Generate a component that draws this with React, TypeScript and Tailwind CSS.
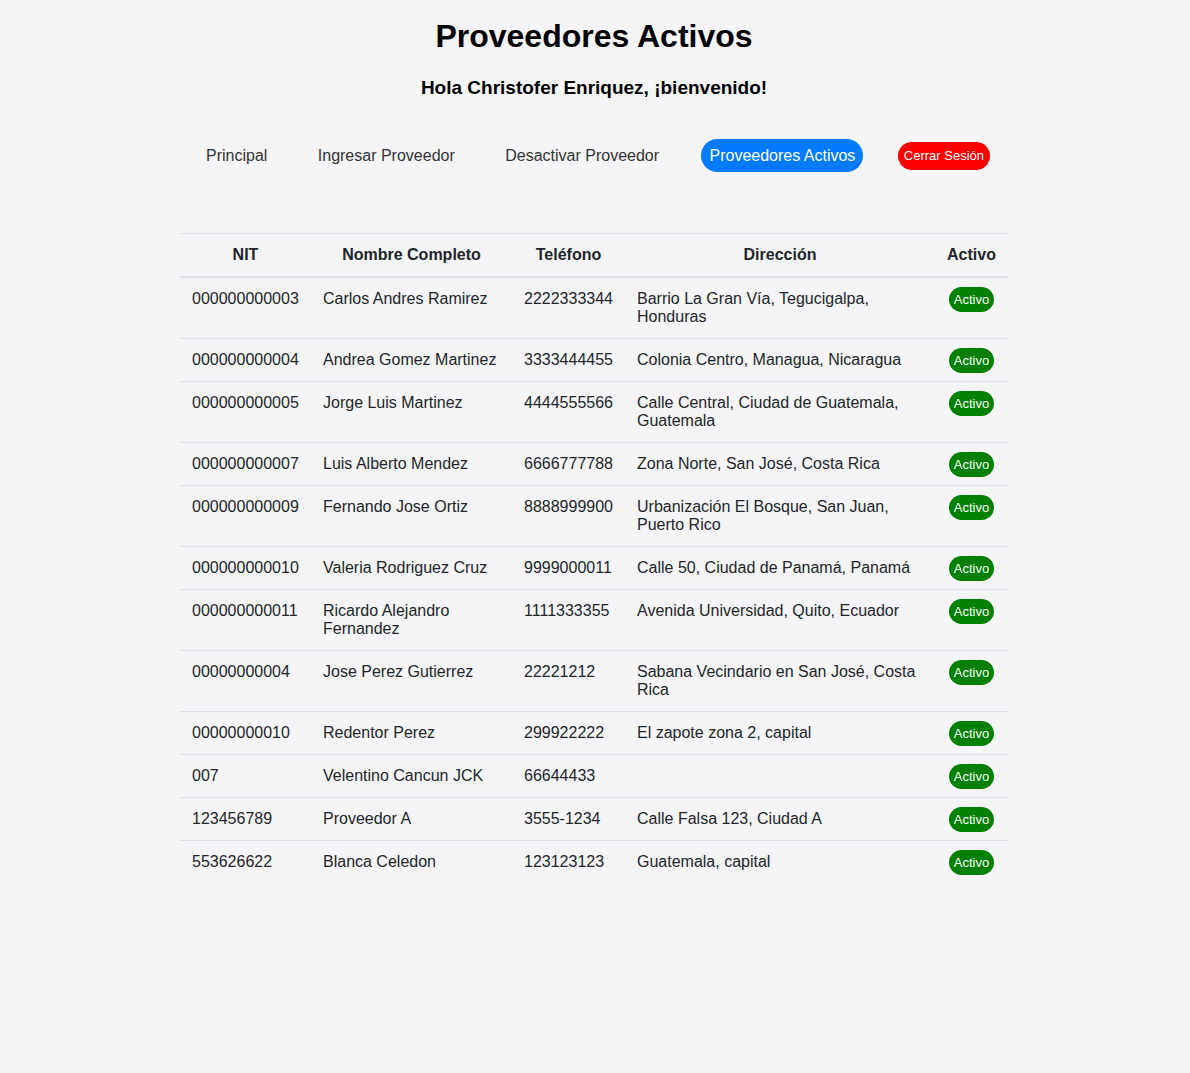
const rows: [string, string, string, string][] = [
  ['000000000003', 'Carlos Andres Ramirez', '2222333344', 'Barrio La Gran Vía, Tegucigalpa, Honduras'],
  ['000000000004', 'Andrea Gomez Martinez', '3333444455', 'Colonia Centro, Managua, Nicaragua'],
  ['000000000005', 'Jorge Luis Martinez', '4444555566', 'Calle Central, Ciudad de Guatemala, Guatemala'],
  ['000000000007', 'Luis Alberto Mendez', '6666777788', 'Zona Norte, San José, Costa Rica'],
  ['000000000009', 'Fernando Jose Ortiz', '8888999900', 'Urbanización El Bosque, San Juan, Puerto Rico'],
  ['000000000010', 'Valeria Rodriguez Cruz', '9999000011', 'Calle 50, Ciudad de Panamá, Panamá'],
  ['000000000011', 'Ricardo Alejandro Fernandez', '1111333355', 'Avenida Universidad, Quito, Ecuador'],
  ['00000000004', 'Jose Perez Gutierrez', '22221212', 'Sabana Vecindario en San José, Costa Rica'],
  ['00000000010', 'Redentor Perez', '299922222', 'El zapote zona 2, capital'],
  ['007', 'Velentino Cancun JCK', '66644433', ''],
  ['123456789', 'Proveedor A', '3555-1234', 'Calle Falsa 123, Ciudad A'],
  ['553626622', 'Blanca Celedon', '123123123', 'Guatemala, capital'],
];

const columns = [
  { label: 'NIT', width: 'w-[131px]' },
  { label: 'Nombre Completo', width: 'w-[201px]' },
  { label: 'Teléfono', width: 'w-[113px]' },
  { label: 'Dirección', width: '' },
  { label: 'Activo', width: 'w-[73px]' },
];

const links = ['Principal', 'Ingresar Proveedor', 'Desactivar Proveedor'];

export default function App() {
  return (
    <div className="min-h-screen bg-[#f5f5f7] pr-0.5 pb-8 font-['Liberation_Sans',Arial,sans-serif] text-base text-[#212529]">
      <header className="pt-4 text-center font-bold text-black">
        <h1 className="text-[32px] leading-10">Proveedores Activos</h1>
        <h2 className="mt-5 text-[19px] leading-6">Hola Christofer Enriquez, ¡bienvenido!</h2>
      </header>
      <nav className="mx-auto mt-[39px] flex w-full max-w-[828px] items-center justify-between px-[18px] leading-[17px] text-[#333]">
        {links.map((link) => (
          <a key={link} href="#" className="p-2">{link}</a>
        ))}
        <a href="#" aria-current="page" className="rounded-full bg-[#007bff] p-2 text-white">Proveedores Activos</a>
        <button type="button" className="h-7 rounded-full bg-[red] px-1.5 text-[13px] text-white">Cerrar Sesión</button>
      </nav>
      <main className="mx-auto mt-[61px] w-full max-w-[828px]">
        <table className="w-full table-fixed border-collapse leading-[18px]">
          <thead>
            <tr className="border-t border-b-2 border-[#dee2e6]">
              {columns.map((column) => (
                <th key={column.label} scope="col" className={`${column.width} p-3 font-bold`}>{column.label}</th>
              ))}
            </tr>
          </thead>
          <tbody>
            {rows.map((row) => (
              <tr key={row[0]} className="border-t border-[#dee2e6] first:border-t-0">
                {row.map((cell, i) => (
                  <td key={i} className="p-3 align-top">{cell}</td>
                ))}
                <td className="px-3 pt-[9px] align-top">
                  <button type="button" className="mx-auto block h-[25px] rounded-full bg-[green] px-[5px] text-[13px] text-white">Activo</button>
                </td>
              </tr>
            ))}
          </tbody>
        </table>
      </main>
    </div>
  );
}
